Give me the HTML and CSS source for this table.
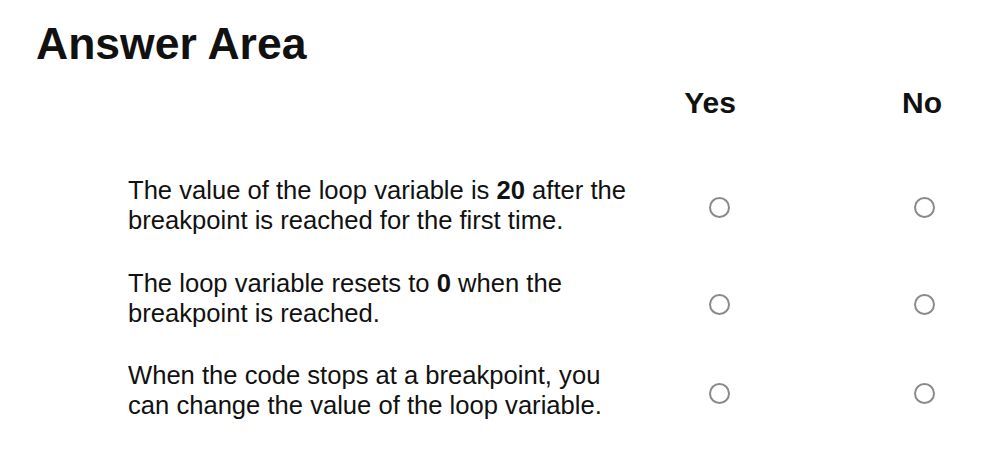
FILE: index.html
```html
<!DOCTYPE html>
<html lang="en">
<head>
<meta charset="utf-8">
<title>Answer Area</title>
<link rel="stylesheet" href="styles.css">
</head>
<body>
<main class="area">
  <h1 class="title">Answer Area</h1>
  <div class="grid">
    <div class="head-spacer"></div>
    <div class="head head-yes">Yes</div>
    <div class="head head-no">No</div>

    <div class="stmt">The value of the loop variable is <b>20</b> after the<br>breakpoint is reached for the first time.</div>
    <div class="opt opt-yes"><span class="radio"></span></div>
    <div class="opt opt-no"><span class="radio"></span></div>

    <div class="stmt stmt-mid">The loop variable resets to <b>0</b> when the<br>breakpoint is reached.</div>
    <div class="opt opt-yes opt-low"><span class="radio"></span></div>
    <div class="opt opt-no opt-low"><span class="radio"></span></div>

    <div class="stmt">When the code stops at a breakpoint, you<br>can change the value of the loop variable.</div>
    <div class="opt opt-yes opt-last"><span class="radio"></span></div>
    <div class="opt opt-no opt-last"><span class="radio"></span></div>
  </div>
</main>
</body>
</html>
```

FILE: styles.css
```css
html, body {
  margin: 0;
  padding: 0;
  background: #ffffff;
}

body {
  font-family: "Liberation Sans", Arial, sans-serif;
  color: #111111;
  width: 1008px;
  height: 449px;
  overflow: hidden;
}

.area {
  padding: 22px 14px 0 0;
}

.title {
  margin: 0 0 0 36px;
  font-size: 44.5px;
  line-height: 44px;
  font-weight: 700;
}

.grid {
  display: grid;
  grid-template-columns: 456px 140px 140px;
  column-gap: 65px;
  row-gap: 32px;
  padding-left: 128px;
  margin-top: 19px;
}

.head {
  font-size: 30px;
  line-height: 36px;
  font-weight: 700;
  text-align: center;
  margin-bottom: 22px;
}

.head-yes {
  padding-right: 18px;
}

.head-no {
  padding-right: 4px;
}

.stmt {
  font-size: 25.6px;
  line-height: 30px;
  white-space: nowrap;
}

.stmt-mid {
  padding-top: 1px;
}

.stmt b {
  font-weight: 700;
}

.opt {
  display: flex;
  align-items: flex-start;
  justify-content: center;
  padding-top: 22px;
}

.opt-low {
  padding-top: 27px;
}

.opt-last {
  padding-top: 23px;
}

.radio {
  display: block;
  width: 17px;
  height: 17px;
  border: 2px solid #8a8a8a;
  border-radius: 50%;
  box-sizing: content-box;
}
```
